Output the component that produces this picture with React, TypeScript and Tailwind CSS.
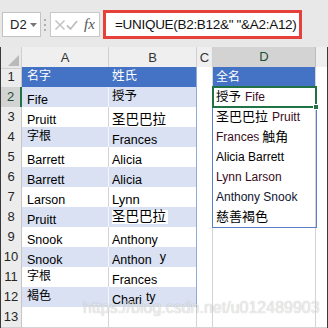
import React from 'react';

const COLS = 'grid grid-cols-[21px_87px_88px_16px_103px_11px]';

type Row = {
  a?: React.ReactNode;
  b?: React.ReactNode;
  d?: React.ReactNode;
  aAlign?: 'end' | 'center';
  bAlign?: 'end' | 'center';
  bWhite?: boolean;
};

const M = ({ children, cls = '' }: { children: React.ReactNode; cls?: string }) => (
  <span className={`text-[#3a0c22] ${cls}`}>{children}</span>
);

const rows: Row[] = [
  { a: '名字', b: '姓氏', d: '全名', aAlign: 'center', bAlign: 'center' },
  {
    a: 'Fife',
    b: <span className="text-[12.5px]">授予</span>,
    bAlign: 'center',
    d: (
      <>
        <span className="text-[12.5px]">授予</span>
        <M cls="ml-[4px]">Fife</M>
      </>
    ),
  },
  {
    a: 'Pruitt',
    b: <span className="text-[13.5px]">圣巴巴拉</span>,
    d: (
      <>
        <span className="text-[13px]">圣巴巴拉</span>
        <M cls="ml-[4px]">Pruitt</M>
      </>
    ),
  },
  {
    a: '字根',
    aAlign: 'center',
    b: 'Frances',
    d: (
      <>
        <M>Frances</M>
        <span className="ml-[3px] text-[13px]">触角</span>
      </>
    ),
  },
  { a: 'Barrett', b: 'Alicia', d: 'Alicia Barrett' },
  { a: 'Barrett', b: 'Alicia', d: <M>Lynn Larson</M> },
  { a: 'Larson', b: <span className="text-[13px]">Lynn</span>, d: <span className="text-[#101530]">Anthony Snook</span> },
  { a: 'Pruitt', b: <span className="text-[13.5px]">圣巴巴拉</span>, bAlign: 'center', bWhite: true, d: <span className="text-[13px]">慈善褐色</span> },
  { a: 'Snook', b: 'Anthony' },
  {
    a: 'Snook',
    b: (
      <>
        Anthon<span className="inline-block ml-[8px] -translate-y-[3px]">y</span>
      </>
    ),
  },
  { a: '字根', aAlign: 'center', b: 'Frances' },
  {
    a: '褐色',
    aAlign: 'center',
    b: (
      <>
        Chari<span className="inline-block ml-[4px] -translate-y-[3px]">ty</span>
      </>
    ),
  },
  {},
];

function XIcon() {
  return (
    <svg width="12" height="12" viewBox="0 0 12 12">
      <path d="M1.5 1.5 L10.5 10.5 M10.5 1.5 L1.5 10.5" stroke="#c4c4c4" strokeWidth="1.6" fill="none" />
    </svg>
  );
}

function CheckIcon() {
  return (
    <svg width="12" height="12" viewBox="0 0 12 12">
      <path d="M1 6.5 L4.5 10 L11 2" stroke="#bdbdbd" strokeWidth="1.8" fill="none" />
    </svg>
  );
}

export default function App() {
  return (
    <div className="relative w-[328px] h-[328px] overflow-hidden bg-[#e8e8e8] font-['Liberation_Sans','Noto_Sans_CJK_SC',sans-serif] text-black">
      {/* Formula bar */}
      <div className="h-[47px] flex items-center pt-[2px]">
        <div className="ml-[2px] w-[39px] h-[25px] bg-white border border-[#c3c3c3] flex items-center pl-[7px] gap-[3px]">
          <span className="text-[13px] leading-none text-[#222]">D2</span>
          <svg width="7" height="4" viewBox="0 0 7 4" className="mt-[1px]">
            <path d="M0 0 L7 0 L3.5 4 Z" fill="#777" />
          </svg>
        </div>
        <div className="ml-[3px] w-[2px] flex flex-col gap-[3px]">
          <div className="w-[2px] h-[2px] bg-[#b0b0b0]" />
          <div className="w-[2px] h-[2px] bg-[#b0b0b0]" />
          <div className="w-[2px] h-[2px] bg-[#b0b0b0]" />
        </div>
        <div className="ml-[4px] w-[50px] h-[25px] bg-white border border-[#c8c8c8] flex items-center pl-[3px]">
          <XIcon />
          <CheckIcon />
          <span className="ml-[6px] text-[15px] italic font-['Liberation_Serif',serif] text-[#555] leading-none">fx</span>
        </div>
        <div className="ml-[3px] w-[199px] h-[29px] bg-white border-[3px] border-[#e5413a] flex items-center pl-[9px]">
          <span className="text-[13.5px] tracking-[-0.3px] leading-none text-[#111] whitespace-pre">=UNIQUE(B2:B12&amp;" "&amp;A2:A12)</span>
        </div>
      </div>

      {/* Grid */}
      <div className="border-l border-r border-b border-[#3a3a3a]">
        {/* Column header */}
        <div className={`${COLS} h-[20px] bg-[#efefef]`}>
          <div className="relative border-r border-b border-[#cfcfcf] bg-[#e9e9e9]">
            <svg width="11" height="11" viewBox="0 0 11 11" className="absolute right-[2px] bottom-[2px]">
              <path d="M11 0 L11 11 L0 11 Z" fill="#b9b9b9" />
            </svg>
          </div>
          {['A', 'B', 'C'].map((c) => (
            <div key={c} className="border-r border-b border-[#d0d0d0] flex items-center justify-center text-[13px] text-[#333]">
              {c}
            </div>
          ))}
          <div className="bg-[#d3d3d3] border-r border-[#bdbdbd] border-b-2 border-b-[#217346] flex items-center justify-center text-[13px] text-[#1f4f33]">
            D
          </div>
          <div className="border-b border-[#d0d0d0]" />
        </div>

        {rows.map((r, i) => {
          const n = i + 1;
          const isHeader = n === 1;
          const inTable = n <= 12;
          const band = n % 2 === 0 && inTable;
          const rowBg = isHeader ? 'bg-[#4472c4] text-white' : band ? 'bg-[#d9e1f2]' : 'bg-white';
          const hLine = inTable ? 'border-b-[#8eaadb]' : 'border-b-[#d4d4d4]';
          const aRight = isHeader ? 'border-r-[#4472c4]' : band ? 'border-r-[#f4f6fb]' : 'border-r-[#d4d4d4]';
          const bRight = inTable ? 'border-r-[#8eaadb]' : 'border-r-[#d4d4d4]';
          const inSpill = n >= 1 && n <= 8;
          const dCls = isHeader
            ? 'bg-[#4472c4] text-white border-b-[#4472c4]'
            : inSpill
            ? 'bg-white border-b-white'
            : 'bg-white border-b-[#d4d4d4]';
          return (
            <div key={n} className={`${COLS} h-[20px]`}>
              <div
                className={`border-b border-[#cfcfcf] flex items-center justify-center text-[13px] ${
                  n === 2 ? 'bg-[#d3d3d3] border-r-2 border-r-[#217346] text-[#1f4f33]' : 'bg-[#ececec] border-r border-r-[#c6c6c6] text-[#262626]'
                }`}
              >
                {n}
              </div>
              <div
                className={`${rowBg} border-r border-b ${aRight} ${hLine} flex ${
                  r.aAlign === 'center' ? 'items-center' : 'items-end'
                } pl-[5px] text-[12.5px] leading-[13px] whitespace-nowrap overflow-visible`}
              >
                <span className={r.aAlign === 'center' ? 'text-[12px]' : ''}>{r.a}</span>
              </div>
              <div
                className={`${rowBg} border-r border-b ${bRight} ${hLine} flex ${
                  r.bAlign === 'center' ? 'items-center' : 'items-end'
                } pl-[3px] text-[12.5px] leading-[13px] whitespace-nowrap`}
              >
                <span className={r.bWhite ? 'bg-white pr-[2px]' : ''}>{r.b}</span>
              </div>
              <div className="bg-white border-r border-b border-[#d4d4d4]" />
              <div className={`border-r border-r-[#d4d4d4] border-b ${dCls} flex items-center pl-[3px] text-[12px] leading-[14px] whitespace-nowrap`}>
                {r.d}
              </div>
              <div className="bg-white border-b border-[#d4d4d4]" />
            </div>
          );
        })}
      </div>

      {/* Spill range border */}
      <div className="absolute left-[212px] top-[86px] w-[105px] h-[142px] border border-[#5b7fcb] pointer-events-none" />
      {/* Active cell selection */}
      <div className="absolute left-[212px] top-[86px] w-[105px] h-[22px] border-2 border-[#217346] pointer-events-none" />
      <div className="absolute left-[313px] top-[104px] w-[6px] h-[6px] bg-[#217346] border border-white pointer-events-none" />

      {/* Watermark */}
      <div className="absolute left-[83px] top-[299px] text-[16px] leading-[18px] text-white/70 [text-shadow:0_0_1px_rgba(0,0,0,0.3)] whitespace-nowrap pointer-events-none">
        https://blog.csdn.net/u012489903
      </div>
    </div>
  );
}
